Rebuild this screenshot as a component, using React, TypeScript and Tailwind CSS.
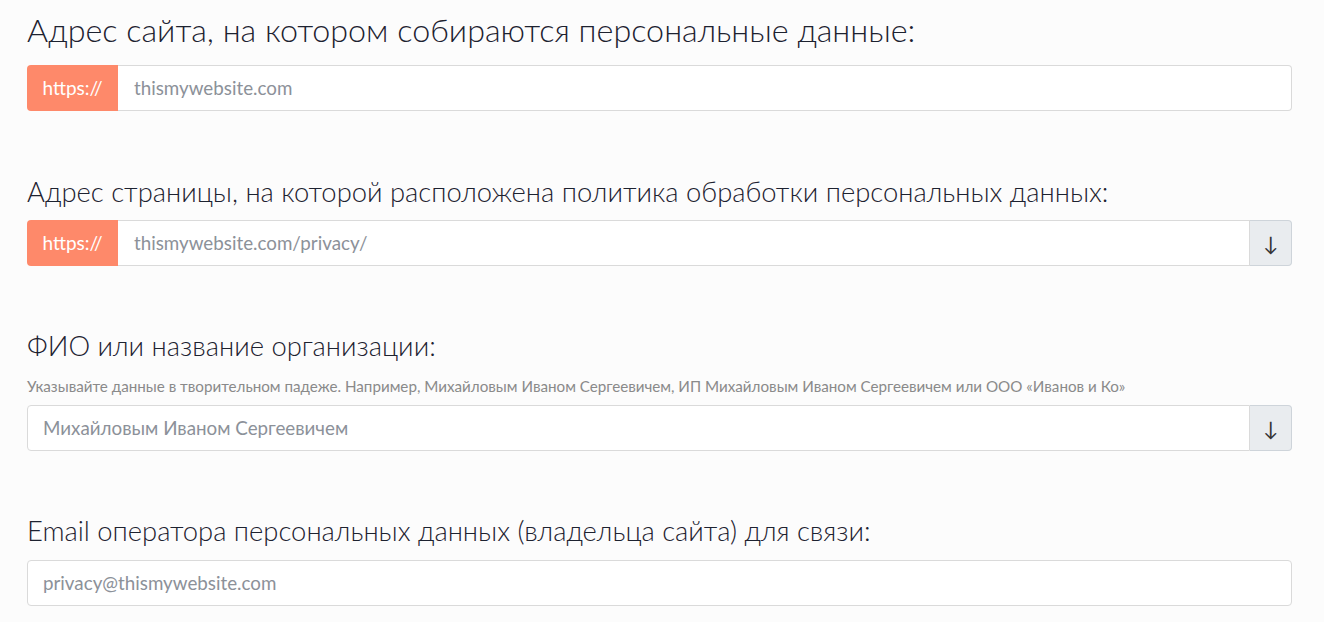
import React from "react";

const font = { fontFamily: "Lato, 'Noto Sans', sans-serif" };

function Heading({ children, big }: { children: React.ReactNode; big?: boolean }) {
  return (
    <h2
      className={
        "leading-[36px] font-light text-[#1d2230] " +
        (big ? "text-[32.3px]" : "text-[27.4px]")
      }
    >
      {children}
    </h2>
  );
}

function Field({
  prefix,
  value,
  arrow,
}: {
  prefix?: boolean;
  value: string;
  arrow?: boolean;
}) {
  return (
    <div className="flex h-[46px] w-full">
      {prefix && (
        <div className="flex w-[91px] shrink-0 items-center justify-center rounded-l-[4px] bg-[#fe896a] text-[19px] text-white">
          https://
        </div>
      )}
      <div
        className={
          "flex flex-1 items-center border border-[#dadada] bg-white text-[18.8px] text-[#8c9199] " +
          (prefix ? "pl-[16px] border-l-0 " : "pl-[15px] rounded-l-[4px] ") +
          (arrow ? "" : "rounded-r-[4px]")
        }
      >
        {value}
      </div>
      {arrow && (
        <div className="flex w-[42px] shrink-0 items-center justify-center rounded-r-[4px] border border-l-0 border-[#ced4da] bg-[#e9ecef] text-[20px] text-[#333]">
          ↓
        </div>
      )}
    </div>
  );
}

export default function App() {
  return (
    <div className="min-h-[622px] w-[1324px] bg-[#fcfcfc] pl-[27px] pr-[32px] pt-[12px]" style={font}>
      <Heading big>Адрес сайта, на котором собираются персональные данные:</Heading>
      <div className="mt-[17px]">
        <Field prefix value="thismywebsite.com" />
      </div>

      <div className="mt-[63px]">
        <Heading>Адрес страницы, на которой расположена политика обработки персональных данных:</Heading>
      </div>
      <div className="mt-[10px]">
        <Field prefix value="thismywebsite.com/privacy/" arrow />
      </div>

      <div className="mt-[62px]">
        <Heading>ФИО или название организации:</Heading>
      </div>
      <p className="mt-[13px] text-[15.2px] leading-[18px] text-[#8a8a8a]">
        Указывайте данные в творительном падеже. Например, Михайловым Иваном Сергеевичем, ИП Михайловым Иваном Сергеевичем или ООО «Иванов и Ко»
      </p>
      <div className="mt-[10px]">
        <Field value="Михайловым Иваном Сергеевичем" arrow />
      </div>

      <div className="mt-[62px]">
        <Heading>Email оператора персональных данных (владельца сайта) для связи:</Heading>
      </div>
      <div className="mt-[11px]">
        <Field value="privacy@thismywebsite.com" />
      </div>
    </div>
  );
}
